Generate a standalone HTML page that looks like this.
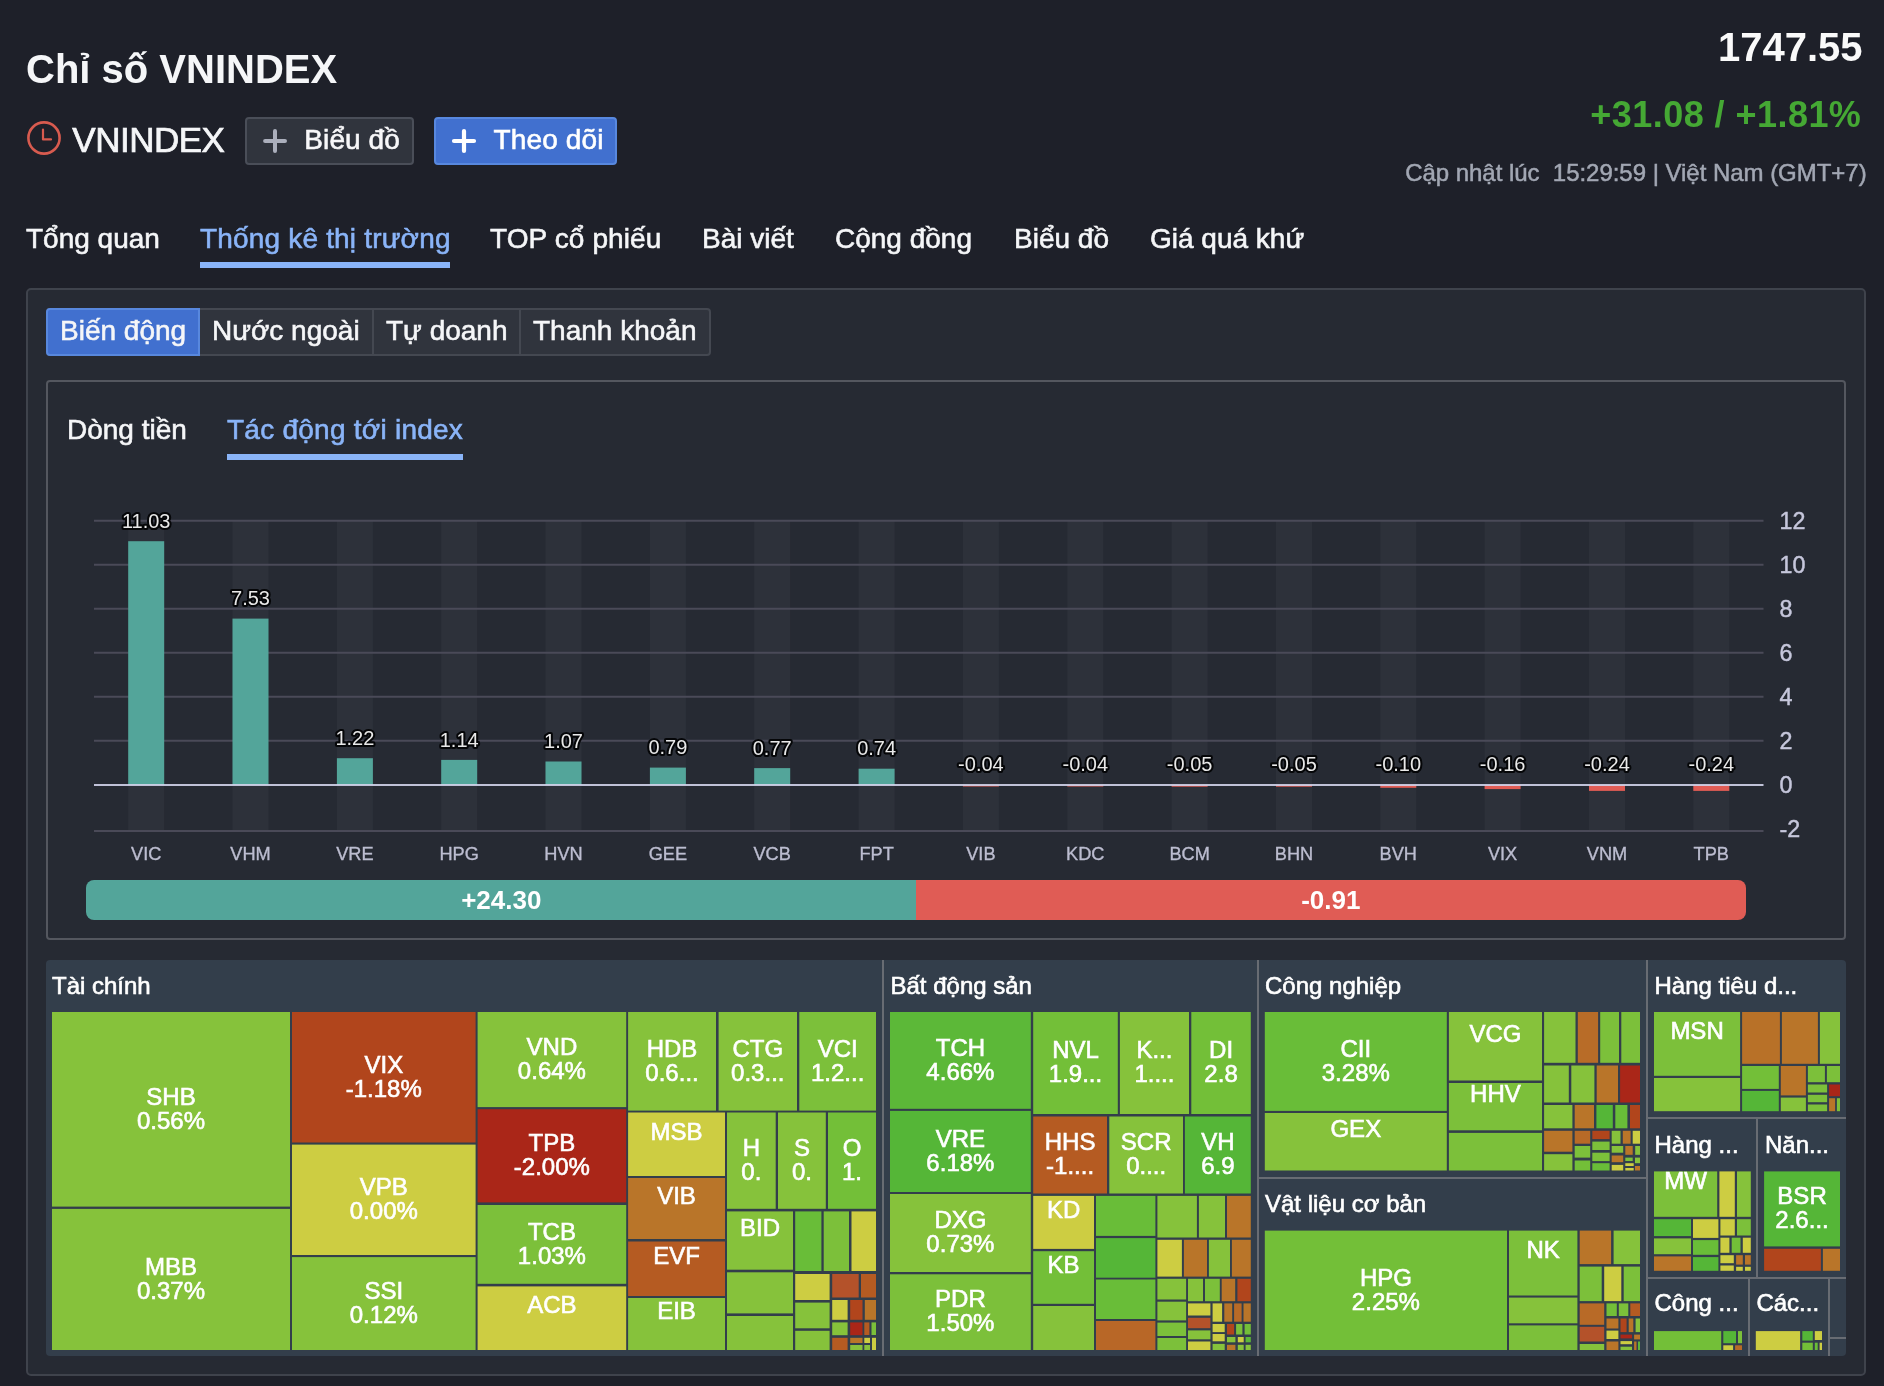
<!DOCTYPE html><html><head><meta charset="utf-8"><title>VNINDEX</title>
<style>
html{background:#1e2029;}html,body{margin:0;padding:0;}
body{width:1884px;height:1386px;position:relative;overflow:hidden;will-change:transform;font-family:"Liberation Sans", sans-serif;color:#fff;}
.a{position:absolute;white-space:pre;line-height:1;}
.c{position:absolute;overflow:hidden;}
.t{position:absolute;left:0;right:0;text-align:center;font-size:24px;line-height:24px;color:#fff;white-space:pre;-webkit-text-stroke:0.62px;}
.g{position:absolute;font-size:24px;line-height:24px;color:#fff;white-space:pre;-webkit-text-stroke:0.62px;}
.s{position:absolute;background:#686c73;}
svg{position:absolute;left:0;top:0;}
svg text{font-family:"Liberation Sans", sans-serif;}
</style></head><body>
<div class="c" style="left:26px;top:288px;width:1840px;height:1088px;box-sizing:border-box;border:2px solid #3f434c;border-radius:5px;background:#262a33"></div>
<div class="a" style="left:26.00px;top:49.14px;font-size:40px;color:#f5f6f8;font-weight:bold;">Chỉ số VNINDEX</div>
<svg width="1884" height="300" viewBox="0 0 1884 300"><circle cx="44" cy="138" r="15.6" fill="none" stroke="#d85b4f" stroke-width="2.6"/><path d="M43 129.6 V139.4 H51" fill="none" stroke="#d85b4f" stroke-width="2.2" stroke-linecap="round" stroke-linejoin="round"/></svg>
<div class="a" style="left:72.30px;top:121.57px;font-size:35px;color:#f5f6f8;font-weight:normal;letter-spacing:-0.5px;-webkit-text-stroke:0.74px;">VNINDEX</div>
<div class="c" style="left:434px;top:117px;width:183px;height:48px;box-sizing:border-box;border:2px solid #5888de;border-radius:4px;background:#4170cf;"></div>
<div class="c" style="left:245px;top:117px;width:169px;height:48px;box-sizing:border-box;border:2px solid #4a4e58;border-radius:4px;background:#30343d;"></div>
<svg width="1884" height="300" viewBox="0 0 1884 300"><path d="M265.1 141 H285 M275 131 V151" stroke="#abafbc" stroke-width="4" stroke-linecap="round"/><path d="M454 141 H474 M464 131 V151" stroke="#fff" stroke-width="4.2" stroke-linecap="round"/></svg>
<div class="a" style="left:304.30px;top:126.30px;font-size:28px;color:#f7f7f9;font-weight:normal;letter-spacing:0.1px;-webkit-text-stroke:0.59px;">Biểu đồ</div>
<div class="a" style="left:493.60px;top:126.30px;font-size:28px;color:#fff;font-weight:normal;letter-spacing:0.12px;-webkit-text-stroke:0.59px;">Theo dõi</div>
<div class="a" style="right:21.40px;top:27.14px;font-size:40px;color:#fafafa;font-weight:bold;">1747.55</div>
<div class="a" style="right:22.70px;top:97.13px;font-size:36px;color:#45a834;font-weight:bold;letter-spacing:0.45px;">+31.08 / +1.81%</div>
<div class="a" style="right:17.40px;top:161.08px;font-size:24px;color:#a2a7b3;font-weight:normal;letter-spacing:-0.03px;-webkit-text-stroke:0.50px;">Cập nhật lúc  15:29:59 | Việt Nam (GMT+7)</div>
<div class="a" style="left:26.00px;top:224.90px;font-size:28px;color:#f5f6f8;font-weight:normal;-webkit-text-stroke:0.59px;">Tổng quan</div>
<div class="a" style="left:200.00px;top:224.90px;font-size:28px;color:#8ab4f8;font-weight:normal;letter-spacing:0.18px;-webkit-text-stroke:0.59px;">Thống kê thị trường</div>
<div class="a" style="left:490.00px;top:224.90px;font-size:28px;color:#f5f6f8;font-weight:normal;letter-spacing:0.1px;-webkit-text-stroke:0.59px;">TOP cổ phiếu</div>
<div class="a" style="left:702.00px;top:224.90px;font-size:28px;color:#f5f6f8;font-weight:normal;-webkit-text-stroke:0.59px;">Bài viết</div>
<div class="a" style="left:835.00px;top:224.90px;font-size:28px;color:#f5f6f8;font-weight:normal;-webkit-text-stroke:0.59px;">Cộng đồng</div>
<div class="a" style="left:1014.00px;top:224.90px;font-size:28px;color:#f5f6f8;font-weight:normal;-webkit-text-stroke:0.59px;">Biểu đồ</div>
<div class="a" style="left:1150.00px;top:224.90px;font-size:28px;color:#f5f6f8;font-weight:normal;-webkit-text-stroke:0.59px;">Giá quá khứ</div>
<div class="c" style="left:200px;top:262px;width:250px;height:6px;background:#8ab4f8"></div>
<div class="c" style="left:46px;top:308px;width:665px;height:48px;box-sizing:border-box;border:2px solid #444851;border-radius:4px;background:#30343d;"></div>
<div class="c" style="left:46px;top:308px;width:154px;height:48px;box-sizing:border-box;border:2px solid #5888de;border-radius:4px 0 0 4px;background:#4170cf;"></div>
<div class="c" style="left:372px;top:310px;width:2px;height:44px;background:#444851;"></div>
<div class="c" style="left:519px;top:310px;width:2px;height:44px;background:#444851;"></div>
<div class="a" style="left:60.00px;top:317.30px;font-size:28px;color:#f5f6f8;font-weight:normal;-webkit-text-stroke:0.59px;">Biến động</div>
<div class="a" style="left:212.00px;top:317.30px;font-size:28px;color:#f5f6f8;font-weight:normal;-webkit-text-stroke:0.59px;">Nước ngoài</div>
<div class="a" style="left:386.00px;top:317.30px;font-size:28px;color:#f5f6f8;font-weight:normal;-webkit-text-stroke:0.59px;">Tự doanh</div>
<div class="a" style="left:533.00px;top:317.30px;font-size:28px;color:#f5f6f8;font-weight:normal;-webkit-text-stroke:0.59px;">Thanh khoản</div>
<div class="c" style="left:46px;top:380px;width:1800px;height:560px;box-sizing:border-box;border:2px solid #54575f;border-radius:4px;"></div>
<div class="a" style="left:67.00px;top:416.30px;font-size:28px;color:#f5f6f8;font-weight:normal;-webkit-text-stroke:0.59px;">Dòng tiền</div>
<div class="a" style="left:227.00px;top:416.30px;font-size:28px;color:#8ab4f8;font-weight:normal;letter-spacing:0.25px;-webkit-text-stroke:0.59px;">Tác động tới index</div>
<div class="c" style="left:227px;top:454px;width:236px;height:6px;background:#8ab4f8"></div>
<svg width="1884" height="960" viewBox="0 0 1884 960"><rect x="128.2" y="521" width="36" height="309" fill="#2d313a"/><rect x="232.5" y="521" width="36" height="309" fill="#2d313a"/><rect x="336.9" y="521" width="36" height="309" fill="#2d313a"/><rect x="441.2" y="521" width="36" height="309" fill="#2d313a"/><rect x="545.5" y="521" width="36" height="309" fill="#2d313a"/><rect x="649.9" y="521" width="36" height="309" fill="#2d313a"/><rect x="754.2" y="521" width="36" height="309" fill="#2d313a"/><rect x="858.6" y="521" width="36" height="309" fill="#2d313a"/><rect x="962.9" y="521" width="36" height="309" fill="#2d313a"/><rect x="1067.3" y="521" width="36" height="309" fill="#2d313a"/><rect x="1171.6" y="521" width="36" height="309" fill="#2d313a"/><rect x="1276.0" y="521" width="36" height="309" fill="#2d313a"/><rect x="1380.3" y="521" width="36" height="309" fill="#2d313a"/><rect x="1484.6" y="521" width="36" height="309" fill="#2d313a"/><rect x="1589.0" y="521" width="36" height="309" fill="#2d313a"/><rect x="1693.3" y="521" width="36" height="309" fill="#2d313a"/><rect x="94.0" y="830.00" width="1669.5" height="2" fill="#4a4a58"/><rect x="94.0" y="739.75" width="1669.5" height="2" fill="#4a4a58"/><rect x="94.0" y="695.75" width="1669.5" height="2" fill="#4a4a58"/><rect x="94.0" y="651.75" width="1669.5" height="2" fill="#4a4a58"/><rect x="94.0" y="607.75" width="1669.5" height="2" fill="#4a4a58"/><rect x="94.0" y="563.75" width="1669.5" height="2" fill="#4a4a58"/><rect x="94.0" y="519.75" width="1669.5" height="2" fill="#4a4a58"/><rect x="128.2" y="541.2" width="36" height="243.8" fill="#53a59a"/><rect x="232.5" y="618.6" width="36" height="166.4" fill="#53a59a"/><rect x="336.9" y="758.2" width="36" height="26.8" fill="#53a59a"/><rect x="441.2" y="759.9" width="36" height="25.1" fill="#53a59a"/><rect x="545.5" y="761.5" width="36" height="23.5" fill="#53a59a"/><rect x="649.9" y="767.6" width="36" height="17.4" fill="#53a59a"/><rect x="754.2" y="768.1" width="36" height="16.9" fill="#53a59a"/><rect x="858.6" y="768.7" width="36" height="16.3" fill="#53a59a"/><rect x="962.9" y="785.0" width="36" height="1.5" fill="#e05c55"/><rect x="1067.3" y="785.0" width="36" height="1.5" fill="#e05c55"/><rect x="1171.6" y="785.0" width="36" height="1.7" fill="#e05c55"/><rect x="1276.0" y="785.0" width="36" height="1.7" fill="#e05c55"/><rect x="1380.3" y="785.0" width="36" height="2.8" fill="#e05c55"/><rect x="1484.6" y="785.0" width="36" height="4.1" fill="#e05c55"/><rect x="1589.0" y="785.0" width="36" height="5.9" fill="#e05c55"/><rect x="1693.3" y="785.0" width="36" height="5.9" fill="#e05c55"/><rect x="94.0" y="784.1" width="1669.5" height="1.8" fill="#d2d3ea"/><text x="146.2" y="527.6" font-size="20" text-anchor="middle" fill="#e9e9e9" stroke="#050608" stroke-width="4.2" stroke-linejoin="round" paint-order="stroke">11.03</text><text x="146.2" y="860" font-size="18.2" text-anchor="middle" fill="#bcbdd0" stroke="#bcbdd0" stroke-width="0.35">VIC</text><text x="250.5" y="605.3" font-size="20" text-anchor="middle" fill="#e9e9e9" stroke="#050608" stroke-width="4.2" stroke-linejoin="round" paint-order="stroke">7.53</text><text x="250.5" y="860" font-size="18.2" text-anchor="middle" fill="#bcbdd0" stroke="#bcbdd0" stroke-width="0.35">VHM</text><text x="354.9" y="744.9" font-size="20" text-anchor="middle" fill="#e9e9e9" stroke="#050608" stroke-width="4.2" stroke-linejoin="round" paint-order="stroke">1.22</text><text x="354.9" y="860" font-size="18.2" text-anchor="middle" fill="#bcbdd0" stroke="#bcbdd0" stroke-width="0.35">VRE</text><text x="459.2" y="746.6" font-size="20" text-anchor="middle" fill="#e9e9e9" stroke="#050608" stroke-width="4.2" stroke-linejoin="round" paint-order="stroke">1.14</text><text x="459.2" y="860" font-size="18.2" text-anchor="middle" fill="#bcbdd0" stroke="#bcbdd0" stroke-width="0.35">HPG</text><text x="563.5" y="748.2" font-size="20" text-anchor="middle" fill="#e9e9e9" stroke="#050608" stroke-width="4.2" stroke-linejoin="round" paint-order="stroke">1.07</text><text x="563.5" y="860" font-size="18.2" text-anchor="middle" fill="#bcbdd0" stroke="#bcbdd0" stroke-width="0.35">HVN</text><text x="667.9" y="754.3" font-size="20" text-anchor="middle" fill="#e9e9e9" stroke="#050608" stroke-width="4.2" stroke-linejoin="round" paint-order="stroke">0.79</text><text x="667.9" y="860" font-size="18.2" text-anchor="middle" fill="#bcbdd0" stroke="#bcbdd0" stroke-width="0.35">GEE</text><text x="772.2" y="754.8" font-size="20" text-anchor="middle" fill="#e9e9e9" stroke="#050608" stroke-width="4.2" stroke-linejoin="round" paint-order="stroke">0.77</text><text x="772.2" y="860" font-size="18.2" text-anchor="middle" fill="#bcbdd0" stroke="#bcbdd0" stroke-width="0.35">VCB</text><text x="876.6" y="755.4" font-size="20" text-anchor="middle" fill="#e9e9e9" stroke="#050608" stroke-width="4.2" stroke-linejoin="round" paint-order="stroke">0.74</text><text x="876.6" y="860" font-size="18.2" text-anchor="middle" fill="#bcbdd0" stroke="#bcbdd0" stroke-width="0.35">FPT</text><text x="980.9" y="771.2" font-size="20" text-anchor="middle" fill="#e9e9e9" stroke="#050608" stroke-width="4.2" stroke-linejoin="round" paint-order="stroke">-0.04</text><text x="980.9" y="860" font-size="18.2" text-anchor="middle" fill="#bcbdd0" stroke="#bcbdd0" stroke-width="0.35">VIB</text><text x="1085.3" y="771.2" font-size="20" text-anchor="middle" fill="#e9e9e9" stroke="#050608" stroke-width="4.2" stroke-linejoin="round" paint-order="stroke">-0.04</text><text x="1085.3" y="860" font-size="18.2" text-anchor="middle" fill="#bcbdd0" stroke="#bcbdd0" stroke-width="0.35">KDC</text><text x="1189.6" y="771.2" font-size="20" text-anchor="middle" fill="#e9e9e9" stroke="#050608" stroke-width="4.2" stroke-linejoin="round" paint-order="stroke">-0.05</text><text x="1189.6" y="860" font-size="18.2" text-anchor="middle" fill="#bcbdd0" stroke="#bcbdd0" stroke-width="0.35">BCM</text><text x="1294.0" y="771.2" font-size="20" text-anchor="middle" fill="#e9e9e9" stroke="#050608" stroke-width="4.2" stroke-linejoin="round" paint-order="stroke">-0.05</text><text x="1294.0" y="860" font-size="18.2" text-anchor="middle" fill="#bcbdd0" stroke="#bcbdd0" stroke-width="0.35">BHN</text><text x="1398.3" y="771.2" font-size="20" text-anchor="middle" fill="#e9e9e9" stroke="#050608" stroke-width="4.2" stroke-linejoin="round" paint-order="stroke">-0.10</text><text x="1398.3" y="860" font-size="18.2" text-anchor="middle" fill="#bcbdd0" stroke="#bcbdd0" stroke-width="0.35">BVH</text><text x="1502.6" y="771.2" font-size="20" text-anchor="middle" fill="#e9e9e9" stroke="#050608" stroke-width="4.2" stroke-linejoin="round" paint-order="stroke">-0.16</text><text x="1502.6" y="860" font-size="18.2" text-anchor="middle" fill="#bcbdd0" stroke="#bcbdd0" stroke-width="0.35">VIX</text><text x="1607.0" y="771.2" font-size="20" text-anchor="middle" fill="#e9e9e9" stroke="#050608" stroke-width="4.2" stroke-linejoin="round" paint-order="stroke">-0.24</text><text x="1607.0" y="860" font-size="18.2" text-anchor="middle" fill="#bcbdd0" stroke="#bcbdd0" stroke-width="0.35">VNM</text><text x="1711.3" y="771.2" font-size="20" text-anchor="middle" fill="#e9e9e9" stroke="#050608" stroke-width="4.2" stroke-linejoin="round" paint-order="stroke">-0.24</text><text x="1711.3" y="860" font-size="18.2" text-anchor="middle" fill="#bcbdd0" stroke="#bcbdd0" stroke-width="0.35">TPB</text><text x="1779.6" y="836.7" font-size="23.3" fill="#c6c7dc" stroke="#c6c7dc" stroke-width="0.45">-2</text><text x="1779.6" y="792.7" font-size="23.3" fill="#c6c7dc" stroke="#c6c7dc" stroke-width="0.45">0</text><text x="1779.6" y="748.7" font-size="23.3" fill="#c6c7dc" stroke="#c6c7dc" stroke-width="0.45">2</text><text x="1779.6" y="704.7" font-size="23.3" fill="#c6c7dc" stroke="#c6c7dc" stroke-width="0.45">4</text><text x="1779.6" y="660.7" font-size="23.3" fill="#c6c7dc" stroke="#c6c7dc" stroke-width="0.45">6</text><text x="1779.6" y="616.7" font-size="23.3" fill="#c6c7dc" stroke="#c6c7dc" stroke-width="0.45">8</text><text x="1779.6" y="572.7" font-size="23.3" fill="#c6c7dc" stroke="#c6c7dc" stroke-width="0.45">10</text><text x="1779.6" y="528.7" font-size="23.3" fill="#c6c7dc" stroke="#c6c7dc" stroke-width="0.45">12</text><path d="M94 880 H916 V920 H94 a8 8 0 0 1 -8 -8 V888 a8 8 0 0 1 8 -8 Z" fill="#53a59a"/><path d="M916 880 H1738 a8 8 0 0 1 8 8 V912 a8 8 0 0 1 -8 8 H916 Z" fill="#e05c55"/><text x="501.3" y="908.9" font-size="26" font-weight="bold" text-anchor="middle" fill="#fff">+24.30</text><text x="1330.8" y="908.9" font-size="26" font-weight="bold" text-anchor="middle" fill="#fff">-0.91</text></svg>
<div class="c" style="left:46px;top:960px;width:1800px;height:396px;background:#333e4b;border-radius:4px;">
<div class="s" style="left:836px;top:0px;width:2px;height:396px"></div>
<div class="s" style="left:1211px;top:0px;width:2px;height:396px"></div>
<div class="s" style="left:1600px;top:0px;width:2px;height:396px"></div>
<div class="s" style="left:1213px;top:217px;width:387px;height:2px"></div>
<div class="s" style="left:1602px;top:157px;width:198px;height:2px"></div>
<div class="s" style="left:1602px;top:317px;width:198px;height:2px"></div>
<div class="s" style="left:1710px;top:159px;width:2px;height:158px"></div>
<div class="s" style="left:1702px;top:319px;width:2px;height:77px"></div>
<div class="s" style="left:1782px;top:319px;width:2px;height:77px"></div>
<div class="s" style="left:1784px;top:377px;width:16px;height:2px"></div>
<div class="g" style="left:6px;top:13.6px">Tài chính</div>
<div class="g" style="left:844.5px;top:13.6px">Bất động sản</div>
<div class="g" style="left:1219px;top:13.6px">Công nghiệp</div>
<div class="g" style="left:1219px;top:232.4px">Vật liệu cơ bản</div>
<div class="g" style="left:1608.5px;top:13.6px">Hàng tiêu d...</div>
<div class="g" style="left:1608.5px;top:172.8px">Hàng ...</div>
<div class="g" style="left:1719px;top:172.8px">Năn...</div>
<div class="g" style="left:1608.5px;top:331.4px">Công ...</div>
<div class="g" style="left:1710.4px;top:331.4px">Các...</div>
<svg width="1800" height="396" viewBox="46 960 1800 396"><rect x="52.0" y="1012.0" width="238.0" height="194.6" fill="#86c23b"/><rect x="52.0" y="1208.9" width="238.0" height="141.1" fill="#86c23b"/><rect x="292.0" y="1012.0" width="183.6" height="130.5" fill="#b1451c"/><rect x="292.0" y="1144.6" width="183.6" height="110.4" fill="#cdcd42"/><rect x="292.0" y="1257.1" width="183.6" height="92.9" fill="#86c23b"/><rect x="477.6" y="1012.0" width="148.6" height="95.1" fill="#86c23b"/><rect x="477.6" y="1109.2" width="148.6" height="93.2" fill="#aa2618"/><rect x="477.6" y="1205.0" width="148.6" height="78.8" fill="#7cc03a"/><rect x="477.6" y="1286.4" width="148.6" height="63.6" fill="#cdcd42"/><rect x="628.1" y="1012.0" width="87.9" height="98.6" fill="#86c23b"/><rect x="718.6" y="1012.0" width="78.4" height="98.6" fill="#86c23b"/><rect x="799.3" y="1012.0" width="76.7" height="98.6" fill="#7cc03a"/><rect x="628.1" y="1112.5" width="96.9" height="63.5" fill="#cdcd42"/><rect x="628.1" y="1178.0" width="96.9" height="61.0" fill="#b97529"/><rect x="628.1" y="1241.5" width="96.9" height="54.5" fill="#b55b22"/><rect x="628.1" y="1298.0" width="96.9" height="52.0" fill="#86c23b"/><rect x="727.0" y="1112.5" width="48.7" height="96.3" fill="#86c23b"/><rect x="778.0" y="1112.5" width="47.8" height="96.3" fill="#86c23b"/><rect x="828.0" y="1112.5" width="48.0" height="96.3" fill="#73bf38"/><rect x="727.0" y="1211.4" width="66.0" height="58.3" fill="#86c23b"/><rect x="795.2" y="1211.4" width="26.2" height="59.6" fill="#69bd38"/><rect x="823.7" y="1211.4" width="25.3" height="59.6" fill="#7cc03a"/><rect x="851.5" y="1211.4" width="24.5" height="59.6" fill="#cdcd42"/><rect x="727.0" y="1272.3" width="66.0" height="41.1" fill="#86c23b"/><rect x="727.0" y="1316.0" width="66.0" height="34.0" fill="#86c23b"/><rect x="795.2" y="1274.0" width="34.4" height="26.0" fill="#cdcd42"/><rect x="795.2" y="1302.6" width="34.4" height="25.7" fill="#86c23b"/><rect x="795.2" y="1330.8" width="34.4" height="19.2" fill="#86c23b"/><rect x="832.2" y="1274.0" width="26.5" height="23.5" fill="#b4522a"/><rect x="861.0" y="1274.0" width="15.0" height="23.5" fill="#b55b22"/><rect x="832.2" y="1300.0" width="15.4" height="19.8" fill="#cdcd42"/><rect x="850.2" y="1300.0" width="12.3" height="19.8" fill="#b1451c"/><rect x="864.8" y="1300.0" width="11.2" height="19.8" fill="#b97529"/><rect x="832.2" y="1322.4" width="15.4" height="12.8" fill="#86c23b"/><rect x="850.2" y="1322.4" width="12.3" height="12.8" fill="#aa2618"/><rect x="864.3" y="1322.4" width="5.1" height="12.6" fill="#b55b22"/><rect x="871.5" y="1322.4" width="4.5" height="12.6" fill="#7cc03a"/><rect x="832.2" y="1337.8" width="15.4" height="12.2" fill="#b55b22"/><rect x="850.2" y="1337.8" width="12.3" height="5.2" fill="#b97529"/><rect x="864.3" y="1337.8" width="5.7" height="5.2" fill="#cdcd42"/><rect x="872.0" y="1337.8" width="4.0" height="12.2" fill="#cdcd42"/><rect x="850.2" y="1345.0" width="12.3" height="5.0" fill="#86c23b"/><rect x="864.3" y="1345.0" width="5.7" height="5.0" fill="#86c23b"/><rect x="890.0" y="1012.0" width="140.8" height="96.8" fill="#5cb838"/><rect x="890.0" y="1110.9" width="140.8" height="81.1" fill="#55b637"/><rect x="890.0" y="1194.0" width="140.8" height="78.0" fill="#86c23b"/><rect x="890.0" y="1274.3" width="140.8" height="75.7" fill="#7cc03a"/><rect x="1033.2" y="1012.0" width="84.6" height="102.0" fill="#73bf38"/><rect x="1119.9" y="1012.0" width="69.1" height="102.0" fill="#86c23b"/><rect x="1191.3" y="1012.0" width="59.5" height="102.0" fill="#73bf38"/><rect x="1033.2" y="1116.5" width="73.8" height="77.0" fill="#b55b22"/><rect x="1109.3" y="1116.5" width="73.7" height="77.0" fill="#86c23b"/><rect x="1184.9" y="1116.5" width="65.9" height="77.0" fill="#55b637"/><rect x="1033.2" y="1195.9" width="60.8" height="53.0" fill="#cdcd42"/><rect x="1033.2" y="1251.2" width="60.8" height="52.6" fill="#73bf38"/><rect x="1033.2" y="1306.0" width="60.8" height="44.0" fill="#86c23b"/><rect x="1096.0" y="1195.9" width="59.4" height="40.0" fill="#69bd38"/><rect x="1096.0" y="1238.1" width="59.4" height="39.6" fill="#55b637"/><rect x="1096.0" y="1279.5" width="59.4" height="39.5" fill="#69bd38"/><rect x="1096.0" y="1321.0" width="59.4" height="29.0" fill="#b86727"/><rect x="1157.4" y="1195.9" width="39.5" height="41.6" fill="#86c23b"/><rect x="1198.9" y="1195.9" width="26.1" height="41.6" fill="#86c23b"/><rect x="1227.0" y="1195.9" width="23.8" height="41.6" fill="#b97529"/><rect x="1157.4" y="1239.8" width="24.5" height="36.8" fill="#cdcd42"/><rect x="1183.9" y="1239.8" width="23.1" height="36.8" fill="#b97529"/><rect x="1208.9" y="1239.8" width="21.1" height="36.8" fill="#86c23b"/><rect x="1231.9" y="1239.8" width="18.9" height="36.8" fill="#b97529"/><rect x="1157.4" y="1278.8" width="28.7" height="20.7" fill="#86c23b"/><rect x="1188.0" y="1278.8" width="15.0" height="22.4" fill="#86c23b"/><rect x="1205.0" y="1278.8" width="14.8" height="22.4" fill="#7cc03a"/><rect x="1221.7" y="1278.8" width="13.5" height="22.4" fill="#b97529"/><rect x="1237.4" y="1278.8" width="13.4" height="22.4" fill="#b1451c"/><rect x="1157.4" y="1301.7" width="28.7" height="18.7" fill="#86c23b"/><rect x="1157.4" y="1322.6" width="28.7" height="13.4" fill="#7cc03a"/><rect x="1157.4" y="1338.0" width="28.7" height="12.0" fill="#7cc03a"/><rect x="1188.0" y="1303.4" width="22.4" height="12.1" fill="#cdcd42"/><rect x="1188.0" y="1317.8" width="22.4" height="10.4" fill="#b4522a"/><rect x="1188.0" y="1330.4" width="22.4" height="8.9" fill="#86c23b"/><rect x="1188.0" y="1341.5" width="22.4" height="8.5" fill="#cdcd42"/><rect x="1212.6" y="1303.4" width="9.5" height="18.3" fill="#cdcd42"/><rect x="1224.3" y="1303.4" width="7.9" height="18.3" fill="#b97529"/><rect x="1234.1" y="1303.4" width="7.5" height="18.3" fill="#b86a27"/><rect x="1243.5" y="1303.4" width="7.3" height="18.3" fill="#b97529"/><rect x="1212.6" y="1324.0" width="12.1" height="8.1" fill="#cdcd42"/><rect x="1227.0" y="1324.0" width="7.1" height="10.5" fill="#b1451c"/><rect x="1236.1" y="1324.0" width="6.3" height="10.5" fill="#7cc03a"/><rect x="1244.6" y="1324.0" width="6.2" height="10.5" fill="#73bf38"/><rect x="1212.6" y="1334.0" width="12.1" height="7.3" fill="#cdcd42"/><rect x="1227.0" y="1337.0" width="8.4" height="5.3" fill="#86c23b"/><rect x="1237.8" y="1337.0" width="5.9" height="5.3" fill="#cdcd42"/><rect x="1245.6" y="1337.0" width="5.2" height="5.3" fill="#5cb838"/><rect x="1212.6" y="1343.9" width="12.1" height="6.1" fill="#86c23b"/><rect x="1227.0" y="1344.8" width="8.4" height="5.2" fill="#b97529"/><rect x="1237.8" y="1344.8" width="5.9" height="5.2" fill="#86c23b"/><rect x="1245.6" y="1344.8" width="5.2" height="5.2" fill="#86c23b"/><rect x="1264.8" y="1012.0" width="182.0" height="98.9" fill="#69bd38"/><rect x="1264.8" y="1113.0" width="182.0" height="57.5" fill="#86c23b"/><rect x="1448.9" y="1012.0" width="93.1" height="68.5" fill="#86c23b"/><rect x="1448.9" y="1083.0" width="93.1" height="47.3" fill="#7cc03a"/><rect x="1448.9" y="1132.9" width="93.1" height="37.6" fill="#7cc03a"/><rect x="1544.1" y="1012.0" width="31.4" height="50.8" fill="#86c23b"/><rect x="1577.8" y="1012.0" width="20.3" height="50.8" fill="#b86c28"/><rect x="1600.2" y="1012.0" width="18.8" height="50.8" fill="#7cc03a"/><rect x="1621.3" y="1012.0" width="18.7" height="50.8" fill="#7cc03a"/><rect x="1544.1" y="1065.5" width="24.7" height="37.0" fill="#86c23b"/><rect x="1571.3" y="1065.5" width="23.1" height="37.0" fill="#86c23b"/><rect x="1596.7" y="1065.5" width="21.3" height="37.0" fill="#b97529"/><rect x="1620.1" y="1065.5" width="19.9" height="37.0" fill="#aa2618"/><rect x="1544.1" y="1105.0" width="28.3" height="23.3" fill="#86c23b"/><rect x="1574.7" y="1105.0" width="19.3" height="23.3" fill="#b97529"/><rect x="1596.4" y="1105.0" width="16.4" height="23.3" fill="#55b637"/><rect x="1615.3" y="1105.0" width="12.1" height="23.3" fill="#69bd38"/><rect x="1630.0" y="1105.0" width="10.0" height="23.3" fill="#b1451c"/><rect x="1544.1" y="1130.8" width="28.3" height="20.9" fill="#b97529"/><rect x="1544.1" y="1154.2" width="28.3" height="16.3" fill="#86c23b"/><rect x="1574.7" y="1130.8" width="15.5" height="12.9" fill="#b86a27"/><rect x="1574.7" y="1146.0" width="15.5" height="11.6" fill="#7cc03a"/><rect x="1574.7" y="1160.5" width="15.5" height="10.0" fill="#73bf38"/><rect x="1592.3" y="1130.8" width="17.3" height="8.3" fill="#b1451c"/><rect x="1592.3" y="1141.6" width="17.3" height="8.4" fill="#7cc03a"/><rect x="1592.3" y="1152.7" width="17.3" height="8.4" fill="#7cc03a"/><rect x="1592.3" y="1163.2" width="17.3" height="7.3" fill="#69bd38"/><rect x="1611.7" y="1130.8" width="8.8" height="12.9" fill="#86c23b"/><rect x="1622.8" y="1130.8" width="7.8" height="12.9" fill="#b97529"/><rect x="1632.7" y="1130.8" width="7.3" height="12.9" fill="#cdcd42"/><rect x="1611.7" y="1146.0" width="11.5" height="6.7" fill="#86c23b"/><rect x="1625.3" y="1146.0" width="7.4" height="8.8" fill="#b97529"/><rect x="1635.2" y="1146.0" width="4.8" height="8.8" fill="#86c23b"/><rect x="1611.7" y="1155.5" width="11.5" height="6.7" fill="#b97529"/><rect x="1611.7" y="1164.9" width="11.5" height="5.6" fill="#cdcd42"/><rect x="1625.3" y="1157.6" width="7.4" height="3.4" fill="#7cc03a"/><rect x="1635.0" y="1157.6" width="5.0" height="5.6" fill="#86c23b"/><rect x="1625.3" y="1163.2" width="8.4" height="2.8" fill="#cdcd42"/><rect x="1625.3" y="1168.0" width="8.4" height="2.5" fill="#cdcd42"/><rect x="1635.0" y="1166.0" width="5.0" height="4.5" fill="#b97529"/><rect x="1264.8" y="1230.6" width="242.2" height="119.4" fill="#73bf38"/><rect x="1509.0" y="1230.6" width="68.4" height="64.9" fill="#7cc03a"/><rect x="1509.0" y="1297.6" width="68.4" height="25.7" fill="#86c23b"/><rect x="1509.0" y="1325.4" width="68.4" height="24.6" fill="#7cc03a"/><rect x="1579.7" y="1230.6" width="31.4" height="33.5" fill="#b97529"/><rect x="1613.6" y="1230.6" width="26.4" height="33.5" fill="#86c23b"/><rect x="1579.7" y="1266.6" width="22.0" height="34.5" fill="#7cc03a"/><rect x="1604.2" y="1266.6" width="17.1" height="34.5" fill="#cdcd42"/><rect x="1623.7" y="1266.6" width="16.3" height="34.5" fill="#7cc03a"/><rect x="1579.7" y="1303.4" width="24.5" height="21.4" fill="#b86a27"/><rect x="1579.7" y="1326.8" width="24.5" height="14.7" fill="#b4522a"/><rect x="1579.7" y="1344.0" width="24.5" height="6.0" fill="#86c23b"/><rect x="1606.5" y="1303.4" width="10.3" height="12.6" fill="#73bf38"/><rect x="1618.8" y="1303.4" width="9.5" height="12.6" fill="#7cc03a"/><rect x="1630.3" y="1303.4" width="9.7" height="12.6" fill="#b55b22"/><rect x="1606.5" y="1318.5" width="11.9" height="10.0" fill="#b97529"/><rect x="1606.5" y="1330.6" width="11.9" height="8.4" fill="#cdcd42"/><rect x="1606.5" y="1341.5" width="11.9" height="8.5" fill="#b97529"/><rect x="1620.5" y="1318.5" width="6.1" height="13.6" fill="#b1451c"/><rect x="1628.7" y="1318.5" width="4.6" height="13.6" fill="#b97529"/><rect x="1635.6" y="1318.5" width="4.4" height="13.6" fill="#86c23b"/><rect x="1620.5" y="1334.6" width="11.5" height="3.8" fill="#aa2618"/><rect x="1634.1" y="1334.6" width="5.9" height="4.8" fill="#b97529"/><rect x="1620.5" y="1341.1" width="11.5" height="3.1" fill="#cdcd42"/><rect x="1620.5" y="1346.7" width="11.5" height="3.3" fill="#86c23b"/><rect x="1634.1" y="1341.5" width="2.4" height="8.5" fill="#b97529"/><rect x="1638.0" y="1341.5" width="2.0" height="8.5" fill="#5cb838"/><rect x="1654.0" y="1012.0" width="86.1" height="63.8" fill="#7cc03a"/><rect x="1654.0" y="1078.0" width="86.1" height="33.2" fill="#86c23b"/><rect x="1742.1" y="1012.0" width="37.8" height="51.8" fill="#b87128"/><rect x="1781.9" y="1012.0" width="36.0" height="51.8" fill="#b97529"/><rect x="1819.9" y="1012.0" width="20.1" height="51.8" fill="#86c23b"/><rect x="1742.1" y="1066.0" width="36.7" height="22.9" fill="#73bf38"/><rect x="1742.1" y="1090.9" width="36.7" height="20.3" fill="#55b637"/><rect x="1780.8" y="1066.0" width="25.1" height="29.4" fill="#b97529"/><rect x="1780.8" y="1097.6" width="25.1" height="13.6" fill="#86c23b"/><rect x="1807.9" y="1066.0" width="17.0" height="16.2" fill="#7cc03a"/><rect x="1826.9" y="1066.0" width="13.1" height="16.2" fill="#7cc03a"/><rect x="1807.9" y="1084.5" width="19.2" height="8.0" fill="#7cc03a"/><rect x="1807.9" y="1094.8" width="19.2" height="7.4" fill="#7cc03a"/><rect x="1807.9" y="1104.5" width="19.2" height="6.7" fill="#7cc03a"/><rect x="1829.1" y="1084.5" width="10.9" height="11.7" fill="#aa2618"/><rect x="1829.1" y="1098.2" width="6.0" height="13.0" fill="#b97529"/><rect x="1836.9" y="1098.2" width="3.1" height="13.0" fill="#7cc03a"/><rect x="1654.0" y="1171.4" width="63.2" height="45.4" fill="#7cc03a"/><rect x="1719.4" y="1171.4" width="15.4" height="45.4" fill="#cdcd42"/><rect x="1737.0" y="1171.4" width="13.8" height="45.4" fill="#86c23b"/><rect x="1654.0" y="1219.2" width="37.0" height="16.9" fill="#55b637"/><rect x="1654.0" y="1238.4" width="37.0" height="15.8" fill="#86c23b"/><rect x="1654.0" y="1256.4" width="37.0" height="14.4" fill="#b97529"/><rect x="1693.0" y="1219.2" width="25.4" height="18.7" fill="#cdcd42"/><rect x="1693.0" y="1240.1" width="25.4" height="14.7" fill="#69bd38"/><rect x="1693.0" y="1257.1" width="25.4" height="13.7" fill="#55b637"/><rect x="1720.4" y="1219.2" width="14.4" height="16.3" fill="#cdcd42"/><rect x="1737.0" y="1219.2" width="13.8" height="16.3" fill="#7cc03a"/><rect x="1720.4" y="1237.7" width="9.0" height="15.1" fill="#cdcd42"/><rect x="1731.7" y="1237.7" width="8.8" height="15.1" fill="#73bf38"/><rect x="1742.8" y="1237.7" width="8.0" height="15.1" fill="#cdcd42"/><rect x="1720.4" y="1255.2" width="13.4" height="8.0" fill="#cdcd42"/><rect x="1736.1" y="1255.2" width="6.7" height="9.4" fill="#b97529"/><rect x="1745.0" y="1255.2" width="5.8" height="9.4" fill="#b97529"/><rect x="1720.4" y="1265.5" width="13.4" height="5.3" fill="#cdcd42"/><rect x="1736.1" y="1266.8" width="6.7" height="4.0" fill="#cdcd42"/><rect x="1745.0" y="1266.8" width="5.8" height="4.0" fill="#cdcd42"/><rect x="1764.1" y="1171.4" width="75.9" height="75.0" fill="#55b637"/><rect x="1764.1" y="1248.8" width="56.8" height="22.0" fill="#b1451c"/><rect x="1822.9" y="1248.8" width="17.1" height="22.0" fill="#b97529"/><rect x="1654.0" y="1331.1" width="67.2" height="18.9" fill="#73bf38"/><rect x="1723.3" y="1331.1" width="12.7" height="12.1" fill="#55b637"/><rect x="1738.0" y="1331.1" width="4.0" height="12.1" fill="#7cc03a"/><rect x="1723.3" y="1345.3" width="9.8" height="4.7" fill="#cdcd42"/><rect x="1735.1" y="1345.3" width="6.9" height="4.7" fill="#b86a27"/><rect x="1755.8" y="1331.1" width="44.3" height="18.9" fill="#cdcd42"/><rect x="1802.3" y="1331.1" width="10.5" height="9.5" fill="#55b637"/><rect x="1814.8" y="1331.1" width="7.2" height="8.9" fill="#cdcd42"/><rect x="1802.3" y="1342.7" width="10.5" height="7.3" fill="#73bf38"/><rect x="1814.8" y="1342.7" width="2.9" height="7.3" fill="#69bd38"/><rect x="1819.6" y="1342.7" width="2.4" height="7.3" fill="#cdcd42"/></svg>
<div class="c" style="left:6.0px;top:52.0px;width:238.0px;height:194.6px"><div class="t" style="top:72.6px">SHB<br>0.56%</div></div>
<div class="c" style="left:6.0px;top:248.9px;width:238.0px;height:141.1px"><div class="t" style="top:45.8px">MBB<br>0.37%</div></div>
<div class="c" style="left:246.0px;top:52.0px;width:183.6px;height:130.5px"><div class="t" style="top:40.5px">VIX<br>-1.18%</div></div>
<div class="c" style="left:246.0px;top:184.6px;width:183.6px;height:110.4px"><div class="t" style="top:30.5px">VPB<br>0.00%</div></div>
<div class="c" style="left:246.0px;top:297.1px;width:183.6px;height:92.9px"><div class="t" style="top:21.8px">SSI<br>0.12%</div></div>
<div class="c" style="left:431.6px;top:52.0px;width:148.6px;height:95.1px"><div class="t" style="top:22.8px">VND<br>0.64%</div></div>
<div class="c" style="left:431.6px;top:149.2px;width:148.6px;height:93.2px"><div class="t" style="top:21.9px">TPB<br>-2.00%</div></div>
<div class="c" style="left:431.6px;top:245.0px;width:148.6px;height:78.8px"><div class="t" style="top:14.7px">TCB<br>1.03%</div></div>
<div class="c" style="left:431.6px;top:326.4px;width:148.6px;height:63.6px"><div class="t" style="top:7.1px">ACB</div></div>
<div class="c" style="left:582.1px;top:52.0px;width:87.9px;height:98.6px"><div class="t" style="top:24.6px">HDB<br>0.6...</div></div>
<div class="c" style="left:672.6px;top:52.0px;width:78.4px;height:98.6px"><div class="t" style="top:24.6px">CTG<br>0.3...</div></div>
<div class="c" style="left:753.3px;top:52.0px;width:76.7px;height:98.6px"><div class="t" style="top:24.6px">VCI<br>1.2...</div></div>
<div class="c" style="left:582.1px;top:152.5px;width:96.9px;height:63.5px"><div class="t" style="top:7.0px">MSB</div></div>
<div class="c" style="left:582.1px;top:218.0px;width:96.9px;height:61.0px"><div class="t" style="top:5.8px">VIB</div></div>
<div class="c" style="left:582.1px;top:281.5px;width:96.9px;height:54.5px"><div class="t" style="top:2.5px">EVF</div></div>
<div class="c" style="left:582.1px;top:338.0px;width:96.9px;height:52.0px"><div class="t" style="top:1.3px">EIB</div></div>
<div class="c" style="left:681.0px;top:152.5px;width:48.7px;height:96.3px"><div class="t" style="top:23.4px">H<br>0.</div></div>
<div class="c" style="left:732.0px;top:152.5px;width:47.8px;height:96.3px"><div class="t" style="top:23.4px">S<br>0.</div></div>
<div class="c" style="left:782.0px;top:152.5px;width:48.0px;height:96.3px"><div class="t" style="top:23.4px">O<br>1.</div></div>
<div class="c" style="left:681.0px;top:251.4px;width:66.0px;height:58.3px"><div class="t" style="top:4.4px">BID</div></div>
<div class="c" style="left:844.0px;top:52.0px;width:140.8px;height:96.8px"><div class="t" style="top:23.7px">TCH<br>4.66%</div></div>
<div class="c" style="left:844.0px;top:150.9px;width:140.8px;height:81.1px"><div class="t" style="top:15.8px">VRE<br>6.18%</div></div>
<div class="c" style="left:844.0px;top:234.0px;width:140.8px;height:78.0px"><div class="t" style="top:14.3px">DXG<br>0.73%</div></div>
<div class="c" style="left:844.0px;top:314.3px;width:140.8px;height:75.7px"><div class="t" style="top:13.2px">PDR<br>1.50%</div></div>
<div class="c" style="left:987.2px;top:52.0px;width:84.6px;height:102.0px"><div class="t" style="top:26.3px">NVL<br>1.9...</div></div>
<div class="c" style="left:1073.9px;top:52.0px;width:69.1px;height:102.0px"><div class="t" style="top:26.3px">K...<br>1....</div></div>
<div class="c" style="left:1145.3px;top:52.0px;width:59.5px;height:102.0px"><div class="t" style="top:26.3px">DI<br>2.8</div></div>
<div class="c" style="left:987.2px;top:156.5px;width:73.8px;height:77.0px"><div class="t" style="top:13.8px">HHS<br>-1....</div></div>
<div class="c" style="left:1063.3px;top:156.5px;width:73.7px;height:77.0px"><div class="t" style="top:13.8px">SCR<br>0....</div></div>
<div class="c" style="left:1138.9px;top:156.5px;width:65.9px;height:77.0px"><div class="t" style="top:13.8px">VH<br>6.9</div></div>
<div class="c" style="left:987.2px;top:235.9px;width:60.8px;height:53.0px"><div class="t" style="top:1.8px">KD</div></div>
<div class="c" style="left:987.2px;top:291.2px;width:60.8px;height:52.6px"><div class="t" style="top:1.6px">KB</div></div>
<div class="c" style="left:1218.8px;top:52.0px;width:182.0px;height:98.9px"><div class="t" style="top:24.8px">CII<br>3.28%</div></div>
<div class="c" style="left:1218.8px;top:153.0px;width:182.0px;height:57.5px"><div class="t" style="top:4.0px">GEX</div></div>
<div class="c" style="left:1402.9px;top:52.0px;width:93.1px;height:68.5px"><div class="t" style="top:9.6px">VCG</div></div>
<div class="c" style="left:1402.9px;top:123.0px;width:93.1px;height:47.3px"><div class="t" style="top:-1.1px">HHV</div></div>
<div class="c" style="left:1218.8px;top:270.6px;width:242.2px;height:119.4px"><div class="t" style="top:35.0px">HPG<br>2.25%</div></div>
<div class="c" style="left:1463.0px;top:270.6px;width:68.4px;height:64.9px"><div class="t" style="top:7.8px">NK</div></div>
<div class="c" style="left:1608.0px;top:52.0px;width:86.1px;height:63.8px"><div class="t" style="top:7.2px">MSN</div></div>
<div class="c" style="left:1608.0px;top:211.4px;width:63.2px;height:45.4px"><div class="t" style="top:-2.0px">MW</div></div>
<div class="c" style="left:1718.1px;top:211.4px;width:75.9px;height:75.0px"><div class="t" style="top:12.8px">BSR<br>2.6...</div></div>
</div>
</body></html>
